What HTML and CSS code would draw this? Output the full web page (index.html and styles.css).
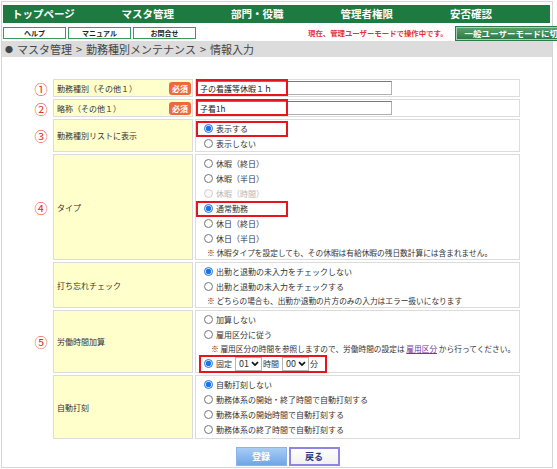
FILE: index.html
```html
<!DOCTYPE html>
<html lang="ja">
<head>
    <meta charset="UTF-8">
    <meta name="viewport" content="width=device-width, initial-scale=1.0">
    <title>勤務種別メンテナンス</title>
    <link rel="stylesheet" href="styles.css">
</head>
<body>

<div class="frame">

    <!-- Global navigation -->
    <div class="header">
        <ul class="gnav">
            <li>トップページ</li>
            <li>マスタ管理</li>
            <li>部門・役職</li>
            <li>管理者権限</li>
            <li>安否確認</li>
        </ul>
        <div class="subbar">
            <div class="tools">
                <a class="tool">ヘルプ</a>
                <a class="tool">マニュアル</a>
                <a class="tool">お問合せ</a>
            </div>
            <p class="mode-note">現在、管理ユーザーモードで操作中です。</p>
            <a class="mode-btn">一般ユーザーモードに切り替え</a>
        </div>
    </div>

    <div class="crumb"><span class="dot">●</span>マスタ管理<span class="sep">&gt;</span>勤務種別メンテナンス<span class="sep">&gt;</span>情報入力</div>

    <!-- Entry form -->
    <div class="content">
        <table class="entry">
            <colgroup>
                <col class="c-num">
                <col class="c-label">
                <col class="c-val">
            </colgroup>
            <tr>
                <td class="num">①</td>
                <th class="label">
                    <div class="label-in"><span>勤務種別（その他１）</span><span class="req">必須</span></div>
                </th>
                <td class="val val-text">
                    <span class="field"><input type="text" value="子の看護等休暇１ｈ"><i class="mark mark-text"></i></span>
                </td>
            </tr>
            <tr>
                <td class="num">②</td>
                <th class="label">
                    <div class="label-in"><span>略称（その他１）</span><span class="req">必須</span></div>
                </th>
                <td class="val val-text">
                    <span class="field"><input type="text" value="子看1h"><i class="mark mark-text"></i></span>
                </td>
            </tr>
            <tr>
                <td class="num">③</td>
                <th class="label">勤務種別リストに表示</th>
                <td class="val">
                    <label class="opt"><input type="radio" name="show" checked>表示する<i class="mark mark-opt"></i></label>
                    <label class="opt"><input type="radio" name="show">表示しない</label>
                </td>
            </tr>
            <tr>
                <td class="num">④</td>
                <th class="label">タイプ</th>
                <td class="val">
                    <label class="opt"><input type="radio" name="type">休暇（終日）</label>
                    <label class="opt"><input type="radio" name="type">休暇（半日）</label>
                    <label class="opt off"><input type="radio" name="type" disabled>休暇（時間）</label>
                    <label class="opt"><input type="radio" name="type" checked>通常勤務<i class="mark mark-opt"></i></label>
                    <label class="opt"><input type="radio" name="type">休日（終日）</label>
                    <label class="opt"><input type="radio" name="type">休日（半日）</label>
                    <p class="note">※ 休暇タイプを設定しても、その休暇は有給休暇の残日数計算には含まれません。</p>
                </td>
            </tr>
            <tr>
                <td class="num"></td>
                <th class="label">打ち忘れチェック</th>
                <td class="val">
                    <label class="opt"><input type="radio" name="check" checked>出勤と退勤の未入力をチェックしない</label>
                    <label class="opt"><input type="radio" name="check">出勤と退勤の未入力をチェックする</label>
                    <p class="note">※ どちらの場合も、出勤か退勤の片方のみの入力はエラー扱いになります</p>
                </td>
            </tr>
            <tr>
                <td class="num">⑤</td>
                <th class="label">労働時間加算</th>
                <td class="val">
                    <label class="opt"><input type="radio" name="add">加算しない</label>
                    <label class="opt"><input type="radio" name="add">雇用区分に従う</label>
                    <p class="note note-in">※ 雇用区分の時間を参照しますので、労働時間の設定は <a class="link">雇用区分</a> から行ってください。</p>
                    <div class="opt opt-fixed"><input type="radio" name="add" checked><span class="word">固定</span><span class="sel">01<svg viewBox="0 0 10 8" width="8" height="6"><path d="M1 1.5 5 5.5 9 1.5" fill="none" stroke="#111" stroke-width="2.2"/></svg></span><span class="word">時間</span><span class="sel">00<svg viewBox="0 0 10 8" width="8" height="6"><path d="M1 1.5 5 5.5 9 1.5" fill="none" stroke="#111" stroke-width="2.2"/></svg></span><span class="word">分</span><i class="mark mark-fixed"></i></div>
                </td>
            </tr>
            <tr>
                <td class="num"></td>
                <th class="label">自動打刻</th>
                <td class="val val-last">
                    <label class="opt"><input type="radio" name="stamp" checked>自動打刻しない</label>
                    <label class="opt"><input type="radio" name="stamp">勤務体系の開始・終了時間で自動打刻する</label>
                    <label class="opt"><input type="radio" name="stamp">勤務体系の開始時間で自動打刻する</label>
                    <label class="opt"><input type="radio" name="stamp">勤務体系の終了時間で自動打刻する</label>
                </td>
            </tr>
        </table>

        <div class="actions">
            <button class="btn btn-save">登録</button>
            <button class="btn btn-back">戻る</button>
        </div>
    </div>

</div>

</body>
</html>
```

FILE: styles.css
```css
* {
    margin: 0;
    padding: 0;
    box-sizing: border-box;
}
html, body {
    overflow: hidden;
}
body {
    font-family: "Noto Sans CJK JP", "Noto Sans", sans-serif;
    font-size: 8px;
    color: #333;
    background: #fff;
}
.frame {
    width: 552px;
    height: 467px;
    margin: 1px 0 0 1px;
    border: 1px solid #d6d6d6;
}

/* header */
.header {
    padding: 3px 2px 0 1px;
}
.gnav {
    list-style: none;
    display: grid;
    grid-template-columns: repeat(5, 109.5px);
    height: 18px;
    background: #1d7a40;
}
.gnav li {
    padding-left: 9px;
    color: #fff;
    font-size: 10.5px;
    font-weight: bold;
    line-height: 18px;
}
.subbar {
    display: flex;
    align-items: center;
    height: 18px;
    white-space: nowrap;
}
.tools {
    display: flex;
    gap: 2px;
    padding-top: 1px;
}
.tool {
    width: 63px;
    height: 12px;
    border: 1px solid #3a9a5c;
    background: #fff;
    color: #222;
    font-size: 7px;
    font-weight: bold;
    line-height: 10px;
    text-align: center;
}
.mode-note {
    margin-left: 112px;
    color: #e2333c;
    font-weight: bold;
    font-size: 7.4px;
}
.mode-btn {
    flex-shrink: 0;
    margin-left: 8px;
    margin-top: 2px;
    height: 13px;
    padding: 0 8px;
    background: linear-gradient(#55a06b, #2e7a46);
    border: 1px solid #a8d0b4;
    outline: 1px solid #2e7a46;
    color: #fff;
    font-size: 8.5px;
    font-weight: bold;
    line-height: 11px;
}
.crumb {
    height: 16px;
    padding-left: 3px;
    background: #dcdcdc;
    color: #444;
    font-size: 11px;
    line-height: 16px;
}
.crumb .dot {
    margin-right: 4px;
    font-size: 8px;
    vertical-align: 1px;
}
.crumb .sep {
    margin: 0 4px;
}

/* form table */
.content {
    padding: 20px 0 0 27px;
}
.entry {
    table-layout: fixed;
    width: 493px;
    border-collapse: separate;
    border-spacing: 2px;
}
.c-num { width: 20px; }
.c-label { width: 140px; }
.c-val { width: 325px; }
.num {
    color: #e8301c;
    font-size: 13px;
    line-height: 1;
    text-align: center;
    vertical-align: middle;
}
.label {
    padding: 1px 3px;
    background: #ffffcc;
    border: 1px solid #dcdcdc;
    font-weight: normal;
    text-align: left;
    vertical-align: middle;
    color: #333;
}
.label-in {
    display: flex;
    justify-content: space-between;
    align-items: center;
    margin-right: -2px;
}
.req {
    width: 22px;
    height: 13px;
    border-radius: 3px;
    background: #ec6a3d;
    color: #fff;
    font-weight: bold;
    line-height: 13px;
    text-align: center;
}
.val {
    padding: 1px 8px 0;
    border: 1px solid #dcdcdc;
    background: #fff;
    line-height: 15px;
    vertical-align: top;
}
.val-last {
    padding-bottom: 1px;
}
.val-text {
    padding: 1px;
    vertical-align: middle;
}
.field {
    position: relative;
    display: block;
    width: 195px;
}
.field input {
    display: block;
    width: 195px;
    height: 14px;
    padding: 0 2px;
    border: 1px solid #b0b0b0;
    border-top-color: #7a7a7a;
    border-left-color: #8a8a8a;
    font: inherit;
    color: #222;
}
.opt {
    position: relative;
    display: block;
    height: 15px;
    white-space: nowrap;
}
.opt input {
    width: 9px;
    height: 9px;
    margin: 0 3px 0 0;
    vertical-align: -1px;
    accent-color: #1a73e8;
}
.off {
    color: #b5b5b5;
}
.note {
    height: 13px;
    padding-left: 3px;
    font-size: 7.7px;
    line-height: 14px;
    white-space: nowrap;
}
.note-in {
    padding-left: 7px;
}
.link {
    color: #6a3aa8;
    text-decoration: underline;
}
.opt-fixed {
    display: flex;
    align-items: center;
    height: 17px;
}
.opt-fixed input {
    margin-right: 3px;
}
.sel {
    display: inline-flex;
    align-items: center;
    gap: 2px;
    height: 14px;
    margin: 0 1px 0 3px;
    padding: 0 2px 0 3px;
    border: 1px solid #b5b5b5;
    background: #fff;
    font-size: 9px;
    line-height: 12px;
}

/* red frames marking the edited items */
.mark {
    position: absolute;
    border: 2px solid #e8141c;
    pointer-events: none;
}
.mark-text {
    left: -1px;
    top: -2px;
    width: 92px;
    height: 17px;
}
.mark-opt {
    left: -8px;
    top: 0;
    width: 92px;
    height: 16px;
}
.mark-fixed {
    left: -5px;
    top: 0;
    width: 128px;
    height: 18px;
}

/* buttons */
.actions {
    display: flex;
    justify-content: center;
    gap: 2px;
    padding-left: 24px;
    width: 493px;
    margin-top: 6px;
}
.btn {
    width: 51px;
    height: 19px;
    font-family: inherit;
    font-size: 9px;
    font-weight: bold;
    cursor: pointer;
}
.btn-save {
    background: linear-gradient(#a9cdf5, #6fa6e6);
    border: 1px solid #8ab4e8;
    color: #fff;
}
.btn-back {
    background: linear-gradient(#fff, #f0f0f0);
    border: 2px solid #8f84e6;
    color: #2d3a8c;
}
```
